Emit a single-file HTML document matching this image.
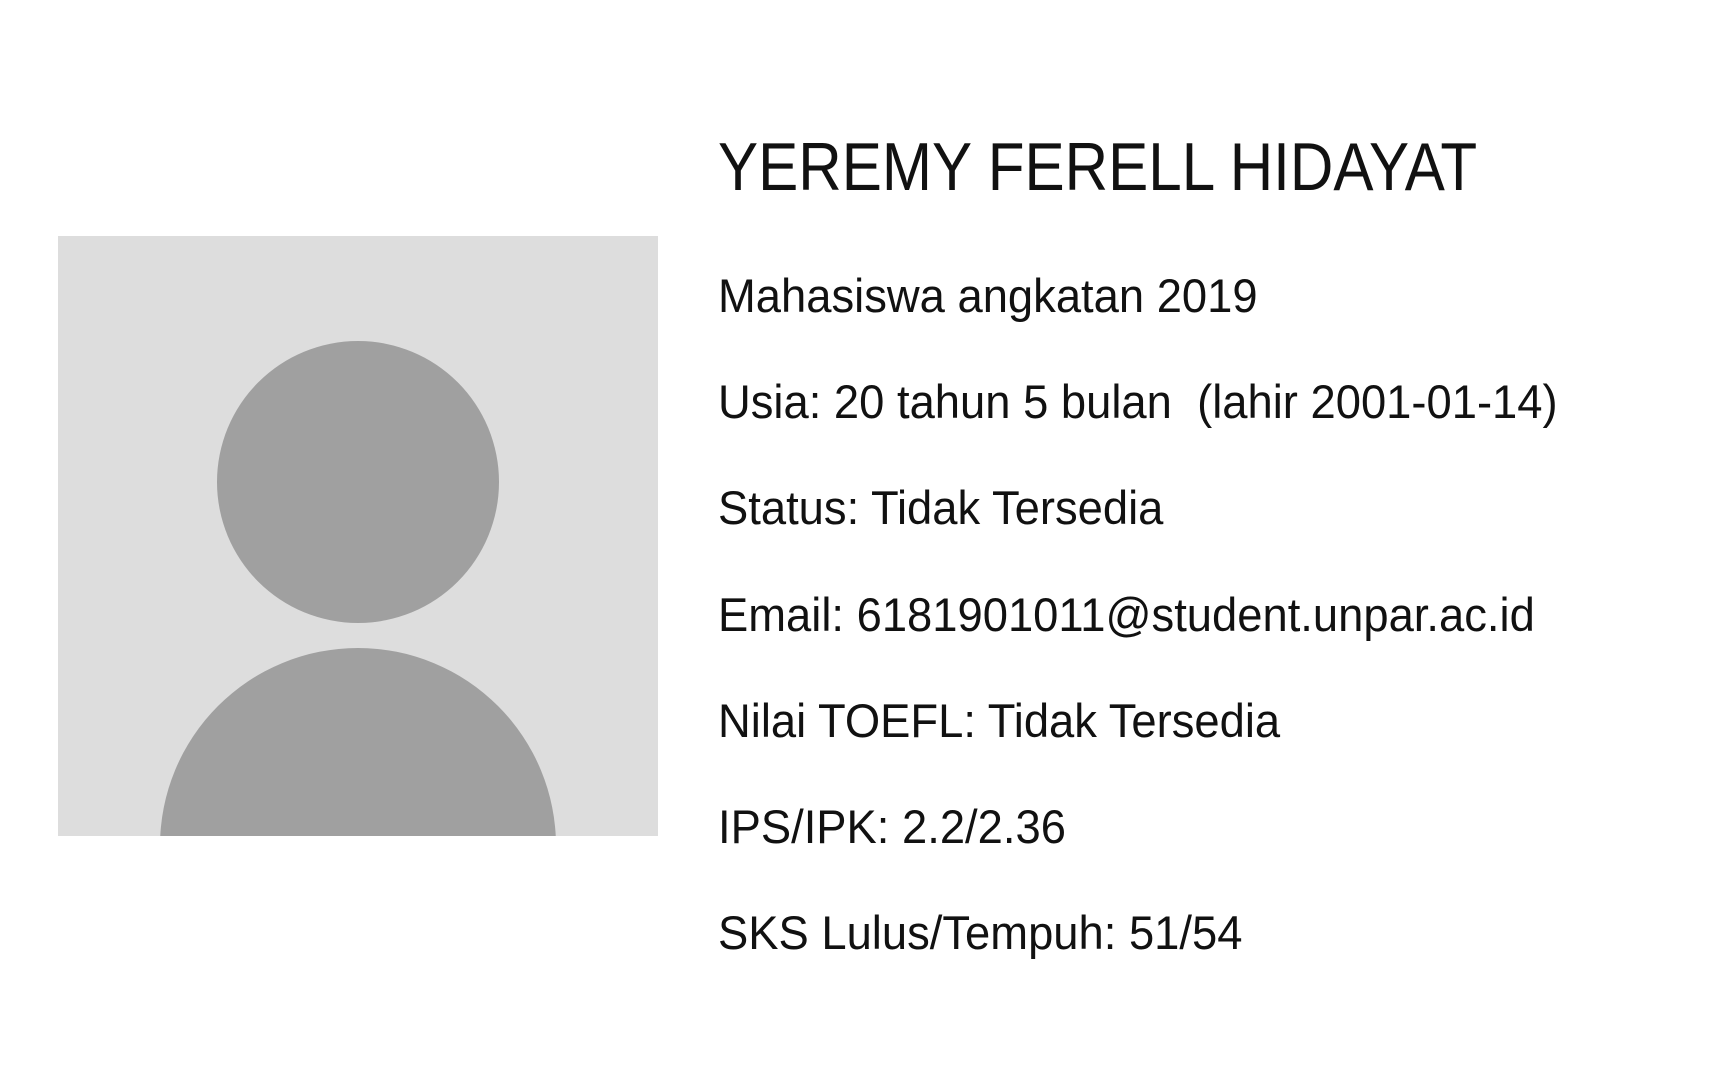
<!DOCTYPE html>
<html><head><meta charset="utf-8">
<style>
html,body{margin:0;padding:0;background:#fff;width:1716px;height:1075px;overflow:hidden;position:relative;font-family:"Liberation Sans",sans-serif;color:#111;}
.t{position:absolute;left:718px;white-space:pre;transform-origin:0 0;line-height:1;}
.h{font-size:68px;transform:scaleX(0.885);}
.l{font-size:47px;transform:scaleX(0.965);}
</style></head><body>
<svg style="position:absolute;left:58px;top:236px" width="600" height="600" viewBox="58 236 600 600">
<rect x="58" y="236" width="600" height="600" fill="#dddddd"/>
<clipPath id="c"><rect x="58" y="236" width="600" height="600"/></clipPath>
<g clip-path="url(#c)" fill="#a0a0a0">
<circle cx="358" cy="482" r="141"/>
<circle cx="358" cy="846" r="198"/>
</g>
</svg>
<div class="t h" style="top:133px">YEREMY FERELL HIDAYAT</div>
<div class="t l" style="top:272px">Mahasiswa angkatan 2019</div>
<div class="t l" style="top:378px">Usia: 20 tahun 5 bulan  (lahir 2001-01-14)</div>
<div class="t l" style="top:484px">Status: Tidak Tersedia</div>
<div class="t l" style="top:591px">Email: 6181901011@student.unpar.ac.id</div>
<div class="t l" style="top:697px">Nilai TOEFL: Tidak Tersedia</div>
<div class="t l" style="top:803px">IPS/IPK: 2.2/2.36</div>
<div class="t l" style="top:909px">SKS Lulus/Tempuh: 51/54</div>
</body></html>
